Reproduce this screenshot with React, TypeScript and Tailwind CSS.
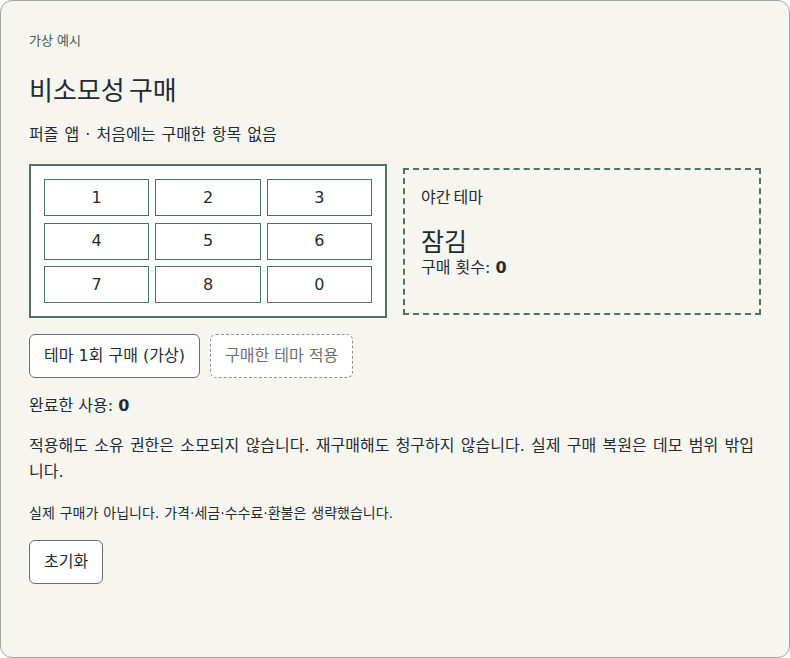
import React, { useState } from 'react';

const keys = ['1', '2', '3', '4', '5', '6', '7', '8', '0'];

export default function App() {
  const [purchases, setPurchases] = useState(0);
  const [uses, setUses] = useState(0);
  const owned = purchases > 0;

  return (
    <div
      className="min-h-screen bg-white text-[#1f2d33]"
      style={{ fontFamily: '"DejaVu Sans", "Noto Sans CJK KR", sans-serif' }}
    >
      <div className="min-h-[658px] rounded-xl border border-[#9ea7a3] bg-[#f6f5f0] px-[28px] pt-[31px]">
        <p className="text-[13px] leading-[18px] text-[#3a5c53]">가상 예시</p>
        <h1 className="mt-[24px] text-[26px] leading-[34px] [word-spacing:-4px]">비소모성 구매</h1>
        <p className="mt-[16px] text-[16px] leading-[22px] [word-spacing:1px]">퍼즐 앱 · 처음에는 구매한 항목 없음</p>

        {/* Keypad + theme panel */}
        <div className="mt-[18px] grid grid-cols-2 items-center gap-4">
          <div className="grid grid-cols-3 gap-x-[6px] gap-y-[6.5px] border-2 border-[#4f7366] bg-white p-[13px]">
            {keys.map((k) => (
              <button
                key={k}
                className="h-[37px] border border-[#4f7366] bg-white text-[16px] text-[#1f2d33]"
              >
                {k}
              </button>
            ))}
          </div>
          <div className="h-[147px] border-2 border-dashed border-[#4f7366] px-4 pt-[17px]">
            <p className="text-[16px] leading-[22px] [word-spacing:-2px]">야간 테마</p>
            <p className="mt-[19px] text-[25px] leading-[29px]">{owned ? '보유' : '잠김'}</p>
            <p className="text-[16px] leading-[22px]">
              구매 횟수: <b>{purchases}</b>
            </p>
          </div>
        </div>

        <div className="mt-4 flex gap-[10px]">
          <button
            onClick={() => setPurchases(purchases + 1)}
            className="h-[44px] rounded-md border border-[#66716d] bg-white px-[14px] text-[16px]"
          >
            테마 1회 구매 (가상)
          </button>
          <button
            onClick={() => owned && setUses(uses + 1)}
            className="h-[44px] rounded-md border border-dashed border-[#8c918e] bg-white px-[14px] text-[16px] text-[#6b706d]"
          >
            구매한 테마 적용
          </button>
        </div>

        <p className="mt-[17px] text-[16px] leading-[22px]">
          완료한 사용: <b>{uses}</b>
        </p>
        <p className="mt-4 text-[16px] leading-[26px] [word-spacing:1.2px]">
          적용해도 소유 권한은 소모되지 않습니다. 재구매해도 청구하지 않습니다. 실제 구매 복원은 데모 범위 밖입니다.
        </p>
        <p className="mt-[18px] text-[14px] leading-[20px] [word-spacing:0.5px]">
          실제 구매가 아닙니다. 가격·세금·수수료·환불은 생략했습니다.
        </p>
        <button
          onClick={() => {
            setPurchases(0);
            setUses(0);
          }}
          className="mt-[17px] h-[44px] rounded-md border border-[#66716d] bg-white px-[14px] text-[16px]"
        >
          초기화
        </button>
      </div>
    </div>
  );
}
